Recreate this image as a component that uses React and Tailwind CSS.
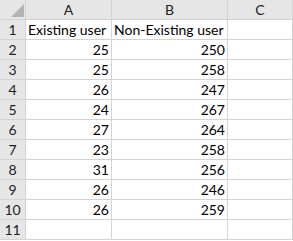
const rows = [
  ["Existing user", "Non-Existing user"],
  [25, 250],
  [25, 258],
  [26, 247],
  [24, 267],
  [27, 264],
  [23, 258],
  [31, 256],
  [26, 246],
  [26, 259],
  ["", ""],
];

function Corner() {
  return (
    <div className="bg-[#e6e6e6] flex items-end justify-end pr-[1px] pb-[2px]">
      <svg width="13" height="13" viewBox="0 0 13 13">
        <polygon points="0,13 13,13 13,0" fill="#b4b4b4" />
      </svg>
    </div>
  );
}

function ColHead({ label }) {
  return (
    <div className="bg-[#e6e6e6] flex items-center justify-center text-[#222] leading-none pt-[1px]">
      {label}
    </div>
  );
}

function RowHead({ n }) {
  return (
    <div className="bg-[#e6e6e6] flex items-end justify-center text-[#222] leading-none pb-[2px]">
      {n}
    </div>
  );
}

function Cell({ value }) {
  const isText = typeof value === "string";
  return (
    <div
      className={
        "bg-white flex items-end leading-none pb-[2px] whitespace-nowrap text-black " +
        (isText ? "justify-start pl-[2px]" : "justify-end pr-[2px]")
      }
    >
      {value}
    </div>
  );
}

export default function App() {
  return (
    <div className="w-[293px] h-[241px] bg-white overflow-hidden" style={{ fontFamily: "Lato, 'Liberation Sans', sans-serif" }}>
      <div className="grid grid-cols-[25px_85px_115px_64px] grid-rows-[19px_repeat(11,19px)] gap-px bg-[#d4d4d4] w-[293px] border-r border-b border-[#d4d4d4] text-[14px]">
        <Corner />
        <ColHead label="A" />
        <ColHead label="B" />
        <ColHead label="C" />
        {rows.map((r, i) => (
          <div key={i} className="contents">
            <RowHead n={i + 1} />
            <Cell value={r[0]} />
            <Cell value={r[1]} />
            <Cell value="" />
          </div>
        ))}
      </div>
    </div>
  );
}
